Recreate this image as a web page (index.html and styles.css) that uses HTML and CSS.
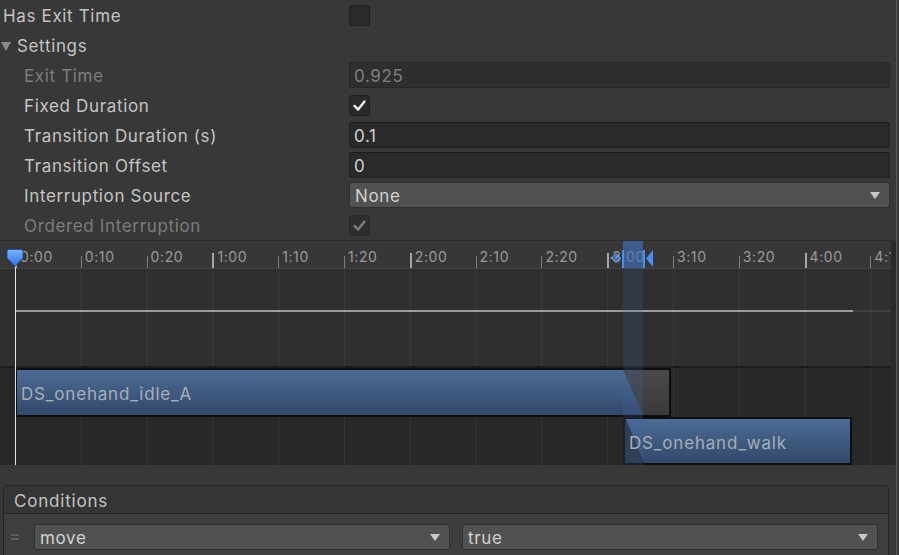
FILE: index.html
```html
<!DOCTYPE html>
<html>
<head>
<meta charset="utf-8">
<link rel="stylesheet" href="styles.css">
</head>
<body>
<div class="window">
  <div class="inspector">
    <div class="row">
      <div class="label">Has Exit Time</div>
      <div class="value"><span class="checkbox"></span></div>
    </div>
    <div class="row">
      <div class="label foldout"><span class="tri"></span>Settings</div>
    </div>
    <div class="row indent disabled">
      <div class="label">Exit Time</div>
      <div class="value"><div class="field">0.925</div></div>
    </div>
    <div class="row indent">
      <div class="label">Fixed Duration</div>
      <div class="value"><span class="checkbox"><svg class="check" viewBox="0 0 21 21"><path d="M5 11 L9 15 L16 6"/></svg></span></div>
    </div>
    <div class="row indent">
      <div class="label">Transition Duration (s)</div>
      <div class="value"><div class="field">0.1</div></div>
    </div>
    <div class="row indent">
      <div class="label">Transition Offset</div>
      <div class="value"><div class="field">0</div></div>
    </div>
    <div class="row indent">
      <div class="label">Interruption Source</div>
      <div class="value"><div class="dd"><span>None</span><span class="arrow"></span></div></div>
    </div>
    <div class="row indent disabled">
      <div class="label">Ordered Interruption</div>
      <div class="value"><span class="checkbox"><svg class="check" viewBox="0 0 21 21"><path d="M5 11 L9 15 L16 6"/></svg></span></div>
    </div>
  </div>

  <div class="timeline">
    <div class="tl-main">
      <div class="ruler">
        <div class="tick major"><span>0:00</span></div>
        <div class="tick"><span>0:10</span></div>
        <div class="tick"><span>0:20</span></div>
        <div class="tick major"><span>1:00</span></div>
        <div class="tick"><span>1:10</span></div>
        <div class="tick"><span>1:20</span></div>
        <div class="tick major"><span>2:00</span></div>
        <div class="tick"><span>2:10</span></div>
        <div class="tick"><span>2:20</span></div>
        <div class="tick major"><span>3:00</span></div>
        <div class="tick"><span>3:10</span></div>
        <div class="tick"><span>3:20</span></div>
        <div class="tick major"><span>4:00</span></div>
        <div class="tick"><span>4:1</span></div>
      </div>
      <div class="curve-track grid">
        <div class="curve"></div>
        <div class="curve-rest"></div>
      </div>
      <div class="clip-track grid">
        <div class="clip-row first">
          <div class="clip idle"><span class="clip-name">DS_onehand_idle_A</span></div>
        </div>
        <div class="clip-row">
          <div class="clip walk"><span class="clip-name">DS_onehand_walk</span></div>
        </div>
      </div>
    </div>
    <div class="tl-edge"></div>

    <div class="hl-ruler"></div>
    <div class="hl-body"></div>
    <div class="playhead"></div>
    <svg class="playhead-knob" viewBox="0 0 18 20">
      <defs>
        <linearGradient id="kg" x1="0" y1="0" x2="0" y2="1">
          <stop offset="0" stop-color="#7cb6ff"/>
          <stop offset="1" stop-color="#2a6fdc"/>
        </linearGradient>
      </defs>
      <path d="M2.5 1.5 H15.5 Q17 1.5 17 3 V10 L9 18.5 L1 10 V3 Q1 1.5 2.5 1.5 Z" fill="url(#kg)" stroke="#1d4c96" stroke-width="1"/>
    </svg>
    <svg class="tr-markers" viewBox="0 0 46 21">
      <path d="M3 10 L7 6 L11 10 L7 14 Z" fill="none" stroke="#5a9cf0" stroke-width="1.4"/>
      <circle cx="7" cy="10" r="1.4" fill="#5a9cf0"/>
      <line x1="1" y1="10" x2="3" y2="10" stroke="#5a9cf0" stroke-width="1.2"/>
      <rect x="13" y="2" width="2" height="18" fill="#4a8ef0"/>
      <rect x="34" y="2" width="2" height="18" fill="#4a8ef0"/>
      <path d="M44 2 L37 10.5 L44 19 Z" fill="#4a8ef0"/>
    </svg>
  </div>

  <div class="conditions">
    <div class="cond-header">Conditions</div>
    <div class="cond-body">
      <span class="handle"></span>
      <div class="dd cond"><span>move</span><span class="arrow"></span></div>
      <div class="dd cond second"><span>true</span><span class="arrow"></span></div>
    </div>
  </div>
</div>
</body>
</html>
```

FILE: styles.css
```css
* { box-sizing: border-box; }
html, body { margin: 0; padding: 0; }
body {
  background: #383838;
  font-family: Inter, "Noto Sans", "Liberation Sans", sans-serif;
  font-size: 17px;
  letter-spacing: 0.65px;
  color: #c4c4c4;
  width: 899px;
  height: 555px;
  overflow: hidden;
}
.window {
  width: 897px;
  height: 555px;
  border-right: 1px solid #5a5a5a;
}

/* inspector rows */
.inspector { display: flex; flex-direction: column; }
.row {
  display: grid;
  grid-template-columns: 349px 1fr;
  align-items: center;
  height: 30px;
  padding-right: 6px;
}
.label { padding-left: 3px; padding-top: 2px; white-space: nowrap; }
.indent .label { padding-left: 24px; }
.disabled .label { color: #7d7d7d; }
.foldout { display: flex; align-items: center; padding-left: 1px; }
.tri {
  width: 0; height: 0;
  border-left: 5px solid transparent;
  border-right: 5px solid transparent;
  border-top: 9px solid #8a8a8a;
  margin-right: 6px;
}
.value { display: flex; align-items: center; }
.checkbox {
  width: 21px; height: 21px;
  background: #2a2a2a;
  border: 1px solid #1f1f1f;
  border-radius: 3px;
  display: flex; align-items: center; justify-content: center;
}
.check { width: 19px; height: 19px; }
.check path { fill: none; stroke: #f0f0f0; stroke-width: 2.6; stroke-linecap: round; stroke-linejoin: round; }
.disabled .checkbox { background: #2e2e2e; border-color: #292929; }
.disabled .check path { stroke: #7e7e7e; }
.field {
  width: 100%;
  height: 26px;
  background: #2a2a2a;
  border: 1px solid #232323;
  border-top-color: #1a1a1a;
  border-radius: 3px;
  padding: 1px 4px 0;
  line-height: 24px;
  color: #d2d2d2;
}
.disabled .field { background: #2e2e2e; color: #7f7f7f; border-color: #272727; }
.dd {
  width: 100%;
  height: 26px;
  background: #515151;
  border: 1px solid #2f2f2f;
  border-radius: 3px;
  padding: 1px 0 0 5px;
  display: flex;
  align-items: center;
  justify-content: space-between;
  color: #d2d2d2;
}
.arrow {
  width: 0; height: 0;
  border-left: 5.5px solid transparent;
  border-right: 5.5px solid transparent;
  border-top: 7px solid #c8c8c8;
  margin-right: 9px;
}

/* timeline */
.timeline { position: relative; display: flex; height: 225px; }
.tl-main { width: 891px; display: flex; flex-direction: column; overflow: hidden; }
.tl-edge { flex: 1; background: #2a2a2a; }
.ruler {
  height: 29px;
  background: #373737;
  border-top: 1px solid #2c2c2c;
  border-bottom: 1px dotted #4e4e4e;
  display: flex;
  padding-left: 15px;
  overflow: hidden;
}
.tick { flex: none; width: 65.8px; display: flex; align-items: flex-end; }
.tick::before {
  content: "";
  flex: none;
  width: 1px; height: 12px;
  background: #7c7c7c;
}
.tick.major::before { height: 15px; background: #a6a6a6; width: 2px; }
.tick span {
  margin-left: 3px;
  margin-bottom: 3px;
  font-size: 14px;
  letter-spacing: 0.6px;
  line-height: 16px;
  color: #9a9a9a;
}
.grid {
  background-image: linear-gradient(to right, #3a3a3a 0, #3a3a3a 1px, transparent 1px);
  background-size: 65.8px 100%;
  background-position: 15px 0;
}
.curve-track {
  height: 97px;
  background-color: #2f2f2f;
  padding-top: 41px;
  display: flex;
  align-items: flex-start;
}
.curve { margin-left: 15px; width: 838px; height: 2px; background: #9c9c9c; }
.curve-rest { flex: 1; height: 2px; background: #424242; }
.clip-track {
  height: 99px;
  background-color: #282828;
  background-image: linear-gradient(to right, #343434 0, #343434 1px, transparent 1px);
  border-top: 2px solid #1c1c1c;
  display: flex;
  flex-direction: column;
}
.clip-row { height: 48px; display: flex; }
.clip-row.first { height: 49px; }
.clip {
  position: relative;
  height: 100%;
  border: 2px solid #0e0e0e;
  background: linear-gradient(#4c6b94, #33486a);
  padding: 3px 0 0 4px;
  display: flex;
  align-items: center;
  overflow: hidden;
}
.clip-name { position: relative; z-index: 1; color: #a6aeb9; white-space: nowrap; letter-spacing: 0.8px; }
.clip.idle { margin-left: 15px; width: 656px; }
.clip.idle::after {
  content: "";
  position: absolute;
  inset: 0;
  background: linear-gradient(#494949, #3a3a3a);
  clip-path: polygon(606px 0, 100% 0, 100% 100%, 626px 100%);
}
.clip.walk { margin-left: 623px; width: 229px; }
.clip.walk::before {
  content: "";
  position: absolute;
  inset: 0;
  background: #2c3544;
  clip-path: polygon(0 0, 1px 0, 19px 100%, 0 100%);
}

/* overlays */
.hl-ruler {
  position: absolute;
  left: 623px; top: 1px;
  width: 20px; height: 27px;
  background: rgba(64, 112, 185, 0.65);
}
.hl-body {
  position: absolute;
  left: 623px; top: 28px; bottom: 0;
  width: 20px;
  background: rgba(64, 104, 172, 0.2);
}
.playhead {
  position: absolute;
  left: 15px; top: 18px; bottom: 0;
  width: 1px;
  background: #e4e4e4;
}
.playhead-knob {
  position: absolute;
  left: 6px; top: 8px;
  width: 18px; height: 20px;
}
.tr-markers {
  position: absolute;
  left: 609px; top: 8px;
  width: 46px; height: 21px;
}

/* conditions */
.conditions {
  margin: 20px 0 0 3px;
  width: 886px;
  border: 1px solid #242424;
  border-radius: 4px;
  overflow: hidden;
}
.cond-header {
  height: 28px;
  background: #353535;
  border-bottom: 1px solid #262626;
  padding: 2px 0 0 10px;
  line-height: 27px;
  letter-spacing: 0.8px;
}
.cond-body {
  background: #3e3e3e;
  padding: 10px 10px 20px 7px;
  display: flex;
  align-items: center;
}
.handle {
  flex: none;
  width: 8px; height: 6px;
  border-top: 2px solid #5c5c5c;
  border-bottom: 2px solid #5c5c5c;
  margin-right: 15px;
}
.dd.cond { flex: none; width: 416px; }
.dd.cond.second { margin-left: 12px; }
```
